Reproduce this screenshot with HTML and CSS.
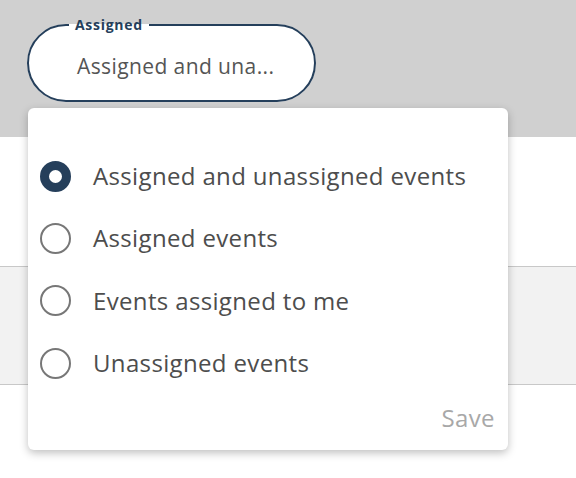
FILE: index.html
```html
<!DOCTYPE html>
<html>
<head>
<meta charset="utf-8">
<link rel="stylesheet" href="styles.css">
</head>
<body>
<div class="page">
  <header class="toolbar">
    <fieldset class="field">
      <legend class="field-label">Assigned</legend>
      <div class="field-value">Assigned and una...</div>
    </fieldset>
  </header>
  <div class="band band-white"></div>
  <div class="band band-gray"></div>
  <div class="band band-rest"></div>

  <div class="menu">
    <ul class="options">
      <li class="option selected"><span class="radio"></span><span class="option-text">Assigned and unassigned events</span></li>
      <li class="option"><span class="radio"></span><span class="option-text">Assigned events</span></li>
      <li class="option"><span class="radio"></span><span class="option-text">Events assigned to me</span></li>
      <li class="option"><span class="radio"></span><span class="option-text">Unassigned events</span></li>
    </ul>
    <div class="menu-footer"><span class="save">Save</span></div>
  </div>
</div>
</body>
</html>
```
FILE: styles.css
```css
* { box-sizing: border-box; }
html, body { margin: 0; padding: 0; }
body {
  font-family: "Open Sans", "Liberation Sans", sans-serif;
  background: #ffffff;
  width: 576px;
  height: 478px;
  overflow: hidden;
}
.page {
  position: relative;
  width: 576px;
  height: 478px;
}
.toolbar {
  height: 137px;
  background: #d0d0d0;
  padding: 15px 0 0 27px;
}
.field {
  margin: 0;
  width: 289px;
  height: 87px;
  border: 2px solid #253f5b;
  border-radius: 40px;
  background: #ffffff;
  padding: 0 0 0 48px;
}
.field-label {
  margin-left: -8px;
  padding: 0 6px;
  font-size: 14px;
  font-weight: 700;
  letter-spacing: 0.7px;
  color: #253f5b;
  line-height: 20px;
}
.field-value {
  margin-top: 18px;
  font-size: 21px;
  letter-spacing: 0.4px;
  color: #555555;
  line-height: 26px;
}
.band-white {
  height: 130px;
  border-bottom: 1px solid #c8c8c8;
}
.band-gray {
  height: 118px;
  background: #f2f2f2;
  border-bottom: 1px solid #c8c8c8;
}
.menu {
  position: absolute;
  left: 28px;
  top: 108px;
  width: 480px;
  height: 342px;
  background: #ffffff;
  border-radius: 6px;
  box-shadow: 0 3px 8px rgba(0,0,0,0.25);
  padding: 37px 13px 0 12px;
}
.options {
  list-style: none;
  margin: 0;
  padding: 0;
}
.option {
  display: flex;
  align-items: center;
  height: 62.3px;
  gap: 22px;
}
.radio {
  flex: none;
  width: 31px;
  height: 31px;
  border-radius: 50%;
  border: 2px solid #777777;
}
.option.selected .radio {
  border: 9.5px solid #253f5b;
}
.option-text {
  font-size: 24px;
  letter-spacing: 0.35px;
  color: #4d4d4d;
  line-height: 30px;
}
.menu-footer {
  display: flex;
  justify-content: flex-end;
  padding-top: 9px;
  padding-right: 0;
}
.save {
  font-size: 24px;
  letter-spacing: 0.4px;
  color: #a8a8a8;
  line-height: 30px;
}
```
